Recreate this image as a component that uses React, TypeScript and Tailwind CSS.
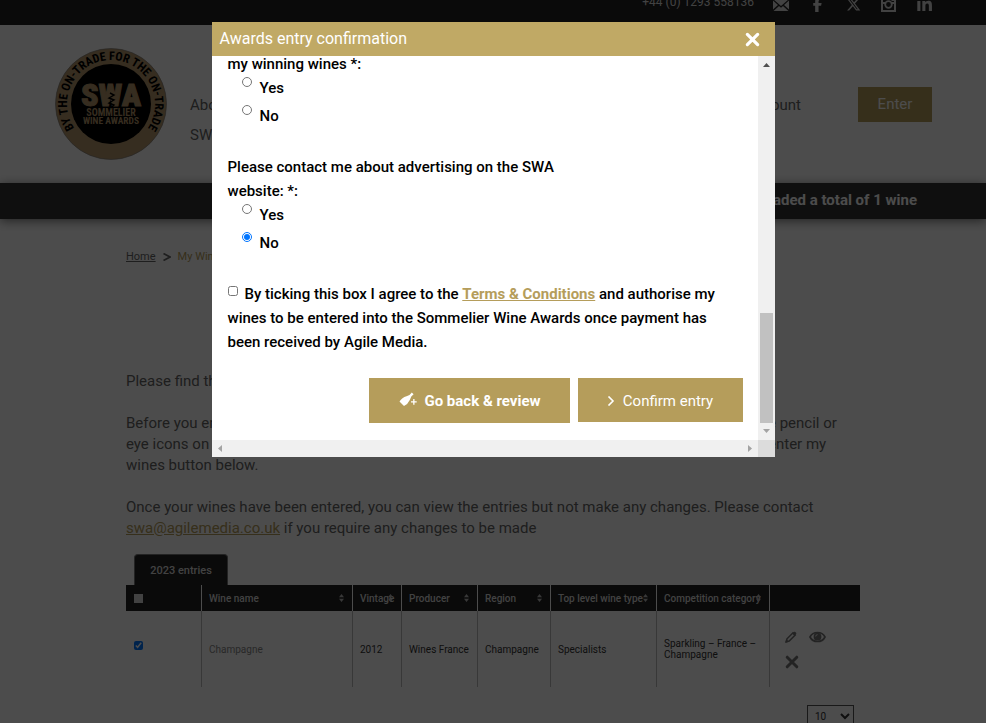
import type { ReactNode } from "react";
import { FaFacebookF, FaLinkedinIn, FaXTwitter } from "react-icons/fa6";

function Logo() {
  return (
    <svg viewBox="0 0 112 112" className="size-28 shrink-0" role="img" aria-label="Sommelier Wine Awards">
      <defs>
        <path id="ring" d="M 29.3 91 A 44 44 0 1 1 82.7 91" />
      </defs>
      <circle cx="56" cy="56" r="55.5" fill="#b5966b" stroke="#777" strokeWidth="0.6" />
      <circle cx="56" cy="56" r="40" fill="#000" />
      <g fontFamily="'Roboto Condensed','Liberation Sans Narrow',sans-serif" fontWeight="700" fill="#b5966b">
        <text x="56" y="58" fontSize="32" fontWeight="900" textAnchor="middle" stroke="#b5966b" strokeWidth="1">SWA</text>
        <text x="56" y="68" fontSize="10" textAnchor="middle">SOMMELIER</text>
        <text x="56" y="76" fontSize="9.5" textAnchor="middle">WINE AWARDS</text>
      </g>
      <path d="M55 45 l4 2 -5 3 5 2 -5 3 5 2 -3 3" fill="none" stroke="#000" strokeWidth="1.4" />
      <text fontFamily="'Roboto Condensed','Liberation Sans Narrow',sans-serif" fontWeight="700" fontSize="12" fill="#000">
        <textPath href="#ring" startOffset="50%" textAnchor="middle">BY THE ON-TRADE FOR THE ON-TRADE</textPath>
      </text>
    </svg>
  );
}

function Envelope() {
  return (
    <svg viewBox="0 0 16 12" className="h-3 w-4" fill="currentColor">
      <path d="M0 0h16L8 7z M0 1.5L5 6 0 10.5z M16 1.5L11 6l5 4.5z M0.500 12L6 7l2 1.700L10 7l5.500 5z" />
    </svg>
  );
}

function Instagram() {
  return (
    <svg viewBox="0 0 15 15" className="size-[15px]" fill="none" stroke="currentColor">
      <path d="M1 1h13v13H1z" strokeWidth="2" />
      <path d="M1 6h3M11 6h3" strokeWidth="2" />
      <circle cx="7.500" cy="7.500" r="3.300" strokeWidth="1.800" />
      <path d="M10.500 3h2.500" strokeWidth="2" />
    </svg>
  );
}

function Sorter() {
  return (
    <svg viewBox="0 0 5 8" className="absolute right-[9px] top-1/2 h-2 w-[5px] -translate-y-1/2" fill="#bbb">
      <path d="M2.500 0L5 3.300H0z M0 4.700h5L2.500 8z" />
    </svg>
  );
}

function Pencil() {
  return (
    <svg viewBox="0 0 12 12" className="size-3" fill="none" stroke="currentColor">
      <path d="M1.200 10.800l0.800-3L8 1.800l2.200 2.200L4.200 10z" strokeWidth="1.600" />
      <path d="M8 1.800l2.200 2.200 M9 1.200l1.800 1.800 M1 11l1.500-1.500" strokeWidth="2.200" />
    </svg>
  );
}

function Eye() {
  return (
    <svg viewBox="0 0 17 12" className="h-3 w-[17px]" fill="none" stroke="currentColor">
      <path d="M1 6C4 0 13 0 16 6 13 12 4 12 1 6z" strokeWidth="1.700" />
      <circle cx="8.500" cy="5.700" r="3.900" fill="currentColor" stroke="none" />
      <path d="M6.700 5.500a1.900 1.900 0 0 1 1.900-1.900" stroke="#fff" strokeWidth="0.800" />
    </svg>
  );
}

function Cross({ className }: { className: string }) {
  return (
    <svg viewBox="0 0 14 14" className={className} fill="none" stroke="currentColor" strokeWidth="3" strokeLinecap="round">
      <path d="M2.200 2.200l9.600 9.600M11.800 2.200L2.200 11.800" />
    </svg>
  );
}

function Bottle() {
  return (
    <svg viewBox="0 0 18 18" className="size-[18px]" fill="currentColor">
      <path d="M0.500 9.500Q3 5.500 7.500 4.300L10.500 2.900 12.800 0.400 14.600 2.200 12.300 4.500 10.800 8Q9 12 5 14z" />
      <path d="M14.200 7h1.300v2.200h2.200v1.300h-2.200v2.200h-1.300v-2.200H12V9.200h2.200z" />
    </svg>
  );
}

const columns = [
  { title: "Wine name", value: "Champagne" },
  { title: "Vintage", value: "2012" },
  { title: "Producer", value: "Wines France" },
  { title: "Region", value: "Champagne" },
  { title: "Top level wine type", value: "Specialists" },
  { title: "Competition category", value: "Sparkling – France – Champagne" },
];

function EntriesTable() {
  return (
    <table className="w-full table-fixed border-collapse text-left text-[10px] leading-[11px]">
      <colgroup>
        <col className="w-[76px]" />
        <col className="w-[151px]" />
        <col className="w-[49px]" />
        <col className="w-[76px]" />
        <col className="w-[73px]" />
        <col className="w-[106px]" />
        <col className="w-[113px]" />
        <col />
      </colgroup>
      <thead>
        <tr className="h-[26px] bg-[#222] text-[#ddd]">
          <th className="px-2 shadow-[inset_-1px_0_#fff]">
            <input type="checkbox" aria-label="Select all" className="block size-[9px] appearance-none bg-[#ddd]" />
          </th>
          {columns.map((c) => (
            <th key={c.title} className="relative whitespace-nowrap pl-[7px] font-medium shadow-[inset_-1px_0_#fff]">
              {c.title}
              <Sorter />
            </th>
          ))}
          <th aria-label="Actions" />
        </tr>
      </thead>
      <tbody>
        <tr className="h-[76px] text-[#333]">
          <td className="px-2 pb-2 shadow-[inset_-1px_0_#bbb]">
            <input type="checkbox" defaultChecked aria-label="Select Champagne" className="block size-[9px]" />
          </td>
          {columns.map((c, i) => (
            <td key={c.title} className={i === 0 ? "pl-[7px] text-[#888] shadow-[inset_-1px_0_#bbb]" : "pl-[7px] shadow-[inset_-1px_0_#bbb]"}>
              {c.value}
            </td>
          ))}
          <td className="px-[15px] pt-0.5 text-[#777]">
            <div className="flex flex-wrap items-center gap-3">
              <button aria-label="Edit"><Pencil /></button>
              <button aria-label="View"><Eye /></button>
              <button aria-label="Delete"><Cross className="size-[14px]" /></button>
            </div>
          </td>
        </tr>
      </tbody>
    </table>
  );
}

function SplitLine({ start, end }: { start: string; end: string }) {
  return (
    <span className="flex">
      <span className="w-[642px]">{start}</span>
      <span className="whitespace-nowrap">{end}</span>
    </span>
  );
}

function Radio({ name, label, checked }: { name: string; label: string; checked?: boolean }) {
  return (
    <label className="ml-[14px] flex h-7 items-start gap-2">
      <input type="radio" name={name} defaultChecked={checked} className="mt-px size-[10px]" />
      {label}
    </label>
  );
}

function Question({ name, answer, children }: { name: string; answer?: string; children: ReactNode }) {
  return (
    <fieldset className="mb-[23px]">
      <legend className="max-w-[350px]">{children}</legend>
      <Radio name={name} label="Yes" />
      <Radio name={name} label="No" checked={answer === "No"} />
    </fieldset>
  );
}

function ConfirmDialog() {
  return (
    <div role="dialog" aria-label="Awards entry confirmation" className="w-[563px] bg-white text-black">
      <header className="flex h-[34px] items-center justify-between bg-[#c0a965] pl-2 pr-[15px] text-base text-white">
        Awards entry confirmation
        <button aria-label="Close"><Cross className="size-[15px]" /></button>
      </header>
      <div className="flex h-96">
        <div className="flex-1 overflow-hidden pl-4 pr-[15px] text-[15px] font-medium leading-6">
          <div className="-mt-1">
            <Question name="winning">my winning wines *:</Question>
            <Question name="advertising" answer="No">
              Please contact me about advertising on the SWA website: *:
            </Question>
            <p className="max-w-[500px]">
              <input type="checkbox" id="terms" className="mr-[7px] size-[10px] align-[3px]" />
              <label htmlFor="terms">
                By ticking this box I agree to the{" "}
                <a href="#terms" className="font-bold text-[#b59d5b] underline">Terms &amp; Conditions</a> and authorise my wines to be
                entered into the Sommelier Wine Awards once payment has been received by Agile Media.
              </label>
            </p>
            <div className="mt-6 flex items-start justify-end gap-2 text-white">
              <button className="flex h-[45px] w-[201px] items-center justify-center gap-[7px] bg-[#b59d5b] pl-0.5 font-bold">
                <Bottle /> Go back &amp; review
              </button>
              <button className="flex h-11 w-[165px] items-center justify-center gap-2 bg-[#b59d5b] pt-0.5 font-normal">
                <svg viewBox="0 0 8 10" className="h-[10px] w-2" fill="none" stroke="currentColor" strokeWidth="1.600">
                  <path d="M1.500 0.500l4.500 4.500-4.500 4.500" />
                </svg>
                Confirm entry
              </button>
            </div>
          </div>
        </div>
        <div className="flex w-[17px] flex-col items-center bg-[#f0f0f0]">
          <svg viewBox="0 0 7 4" className="mt-[7px] h-1 w-[7px]" fill="#505050"><path d="M3.500 0L7 4H0z" /></svg>
          <div className="mb-[6px] mt-auto h-[110px] w-[13px] bg-[#c1c1c1]" />
          <svg viewBox="0 0 7 4" className="mb-[7px] h-1 w-[7px]" fill="#a3a3a3"><path d="M0 0h7L3.500 4z" /></svg>
        </div>
      </div>
      <div className="flex h-[17px] bg-[#f0f0f0]">
        <div className="flex flex-1 items-center justify-between px-[6px]">
          <svg viewBox="0 0 4 7" className="h-[7px] w-1" fill="#a3a3a3"><path d="M4 0v7L0 3.500z" /></svg>
          <svg viewBox="0 0 4 7" className="h-[7px] w-1" fill="#a3a3a3"><path d="M0 0v7l4-3.500z" /></svg>
        </div>
        <div className="w-[17px] bg-[#dcdcdc]" />
      </div>
    </div>
  );
}

export default function App() {
  return (
    <div className="relative h-screen overflow-hidden bg-white font-[Roboto,sans-serif] text-[15px] leading-[21px] text-[#666]">
      <div className="-mt-6">
        <div className="flex h-[49px] items-center justify-end bg-[#222] pr-[53px] text-[#ddd]">
          <span className="mr-[19px] pt-[3px] text-[12px]">+44 (0) 1293 558136</span>
          <nav aria-label="Social" className="flex items-center gap-5 pt-2">
            <a href="#mail" aria-label="Email"><Envelope /></a>
            <a href="#facebook" aria-label="Facebook" className="flex w-4 justify-center"><FaFacebookF size={15} /></a>
            <a href="#x" aria-label="X" className="flex w-4 justify-center"><FaXTwitter size={15} /></a>
            <a href="#instagram" aria-label="Instagram"><Instagram /></a>
            <a href="#linkedin" aria-label="LinkedIn"><FaLinkedinIn size={17} /></a>
          </nav>
        </div>
        <header className="flex h-[158px] items-center bg-white pl-[55px] pr-[54px]">
          <Logo />
          <nav aria-label="Main" className="ml-[23px] grid flex-1 grid-cols-2 pt-8 leading-[30px]">
            <a href="#about">About</a>
            <a href="#account" className="pr-[57px] text-right">My account</a>
            <a href="#swa">SWA</a>
          </nav>
          <button className="h-[35px] w-[74px] bg-[#b59d5b] text-white">Enter</button>
        </header>
        <div className="flex h-9 items-center justify-end bg-[#333] pb-0.5 pr-[69px] font-bold text-white shadow-[0_2px_10px_#777]">
          You have uploaded a total of 1 wine
        </div>
        <main className="mx-auto max-w-[734px]">
          <nav aria-label="Breadcrumb" className="flex h-[75px] items-center gap-[7px] text-[11px]">
            <a href="#home" className="underline">Home</a>
            <svg viewBox="0 0 8 8" className="size-2" fill="none" stroke="#666" strokeWidth="1.700"><path d="M0.500 0.500L7 4 0.500 7.500" /></svg>
            <span className="text-[#b59d5b]">My Wines</span>
          </nav>
          <div className="mt-[77px] space-y-[21px]">
            <p>Please find the wines</p>
            <p>
              <SplitLine start="Before you enter" end="e pencil or" />
              <SplitLine start="eye icons on" end="enter my" />
              wines button below.
            </p>
            <p>
              Once your wines have been entered, you can view the entries but not make any changes. Please contact{" "}
              <a href="#contact" className="text-[#b59d5b] underline">swa@agilemedia.co.uk</a> if you require any changes to be made
            </p>
          </div>
          <div className="mt-[15px] flex pl-2">
            <button className="h-[31px] w-[94px] rounded-t border border-b-0 border-[#777] bg-[#222] text-[11px] font-medium text-[#ddd]">
              2023 entries
            </button>
          </div>
          <EntriesTable />
          <div className="mt-[18px] flex justify-end pr-[6px]">
            <select aria-label="Rows per page" className="h-[22px] w-[47px] border border-[#555] bg-white pl-[3px] text-[10px] text-[#333]">
              <option>10</option>
            </select>
          </div>
        </main>
      </div>
      <div className="absolute inset-0 flex items-start justify-center bg-black/70 pt-[22px]">
        <ConfirmDialog />
      </div>
    </div>
  );
}
